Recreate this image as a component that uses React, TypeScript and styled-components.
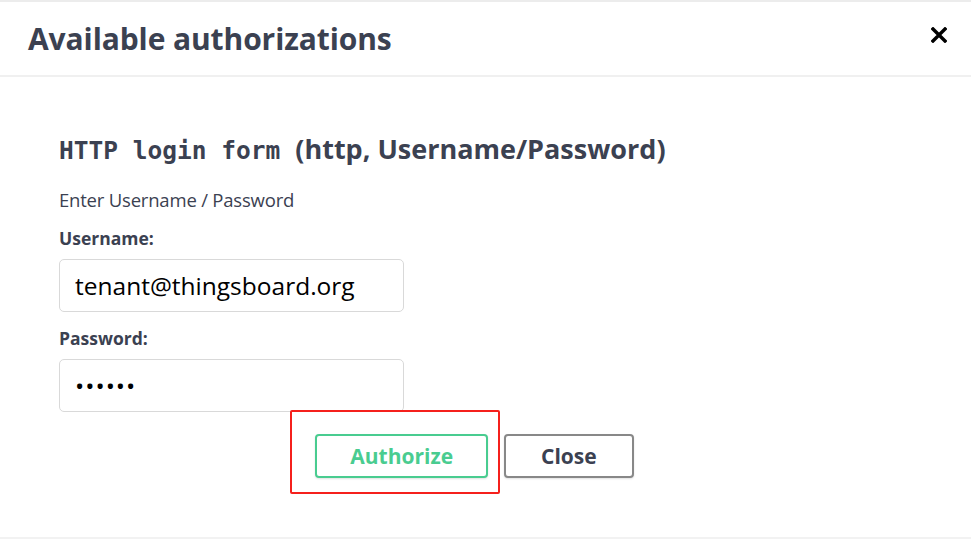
import React from "react";
import styled, { createGlobalStyle } from "styled-components";

const Global = createGlobalStyle`
  html, body { margin: 0; padding: 0; background: #fff; }
  body { font-family: "Open Sans", "Noto Sans", sans-serif; color: #3b4151; }
  * { box-sizing: border-box; }
`;

const Modal = styled.div`
  width: 971px;
  height: 539px;
  border-top: 2px solid #ececec;
  border-bottom: 2px solid #f2f2f2;
  display: flex;
  flex-direction: column;
  background: #fff;
`;

const Header = styled.div`
  height: 75px;
  display: flex;
  align-items: center;
  justify-content: space-between;
  padding: 0 23px 0 28px;
  border-bottom: 2px solid #f0f0f0;
`;

const Title = styled.h3`
  margin: 0;
  font-size: 30px;
  font-weight: 700;
  color: #3b4151;
  letter-spacing: -0.1px;
`;

const CloseIcon = styled.button`
  border: none;
  background: none;
  padding: 0;
  width: 18px;
  height: 18px;
  margin-bottom: 7px;
  display: flex;
  align-items: center;
  justify-content: center;
  cursor: pointer;
`;

const Body = styled.div`
  padding: 53px 59px 0;
  display: flex;
  flex-direction: column;
`;

const SchemeTitle = styled.h4`
  margin: 0 0 20px;
  font-size: 27px;
  font-weight: 700;
  color: #3b4151;
  display: flex;
  align-items: baseline;
  gap: 15px;
`;

const Code = styled.code`
  font-family: "DejaVu Sans Mono", "Liberation Mono", monospace;
  font-size: 24.5px;
  font-weight: 700;
`;

const Hint = styled.p`
  margin: 0 0 14px;
  font-size: 18.5px;
  color: #3b4151;
  letter-spacing: -0.2px;
`;

const Label = styled.label`
  display: block;
  font-size: 17.5px;
  font-weight: 700;
  margin-bottom: 9px;
`;

const Field = styled.div`
  margin-bottom: 14px;
`;

const Input = styled.input`
  width: 345px;
  height: 53px;
  border: 1px solid #d9d9d9;
  border-radius: 5px;
  padding: 0 15px;
  font-family: "Open Sans", "Noto Sans", sans-serif;
  font-size: 24.5px;
  color: #000;
  outline: none;
  background: #fff;
  &[type="password"] {
    letter-spacing: 1px;
  }
`;

const Actions = styled.div`
  display: flex;
  justify-content: center;
  gap: 16px;
  position: relative;
  margin-top: 8px;
  padding-right: 22px;
`;

const Btn = styled.button<{ $tone: "auth" | "close" }>`
  height: 44px;
  padding: 0 ${(p) => (p.$tone === "auth" ? "33px" : "35px")};
  border-radius: 4px;
  background: #fff;
  font-family: "Open Sans", "Noto Sans", sans-serif;
  font-size: 21px;
  font-weight: 700;
  border: 2px solid ${(p) => (p.$tone === "auth" ? "#49cc90" : "#888")};
  color: ${(p) => (p.$tone === "auth" ? "#49cc90" : "#3b4151")};
  box-shadow: 0 1px 2px rgba(0, 0, 0, 0.12);
  cursor: pointer;
`;

const Highlight = styled.div`
  position: absolute;
  left: 231px;
  top: -24px;
  width: 210px;
  height: 84px;
  border: 2px solid #f5201c;
  border-radius: 2px;
  pointer-events: none;
`;

export default function App() {
  return (
    <>
      <Global />
      <Modal>
        <Header>
          <Title>Available authorizations</Title>
          <CloseIcon aria-label="Close">
            <svg width="16" height="16" viewBox="0 0 16 16">
              <path d="M2 2 L14 14 M14 2 L2 14" stroke="#000" strokeWidth="3.4" strokeLinecap="square" />
            </svg>
          </CloseIcon>
        </Header>
        <Body>
          <SchemeTitle>
            <Code>HTTP login form</Code>
            <span>(http, Username/Password)</span>
          </SchemeTitle>
          <Hint>Enter Username / Password</Hint>
          <Field>
            <Label>Username:</Label>
            <Input defaultValue="tenant@thingsboard.org" />
          </Field>
          <Field>
            <Label>Password:</Label>
            <Input type="password" defaultValue="123456" />
          </Field>
          <Actions>
            <Btn $tone="auth">Authorize</Btn>
            <Btn $tone="close">Close</Btn>
            <Highlight />
          </Actions>
        </Body>
      </Modal>
    </>
  );
}
